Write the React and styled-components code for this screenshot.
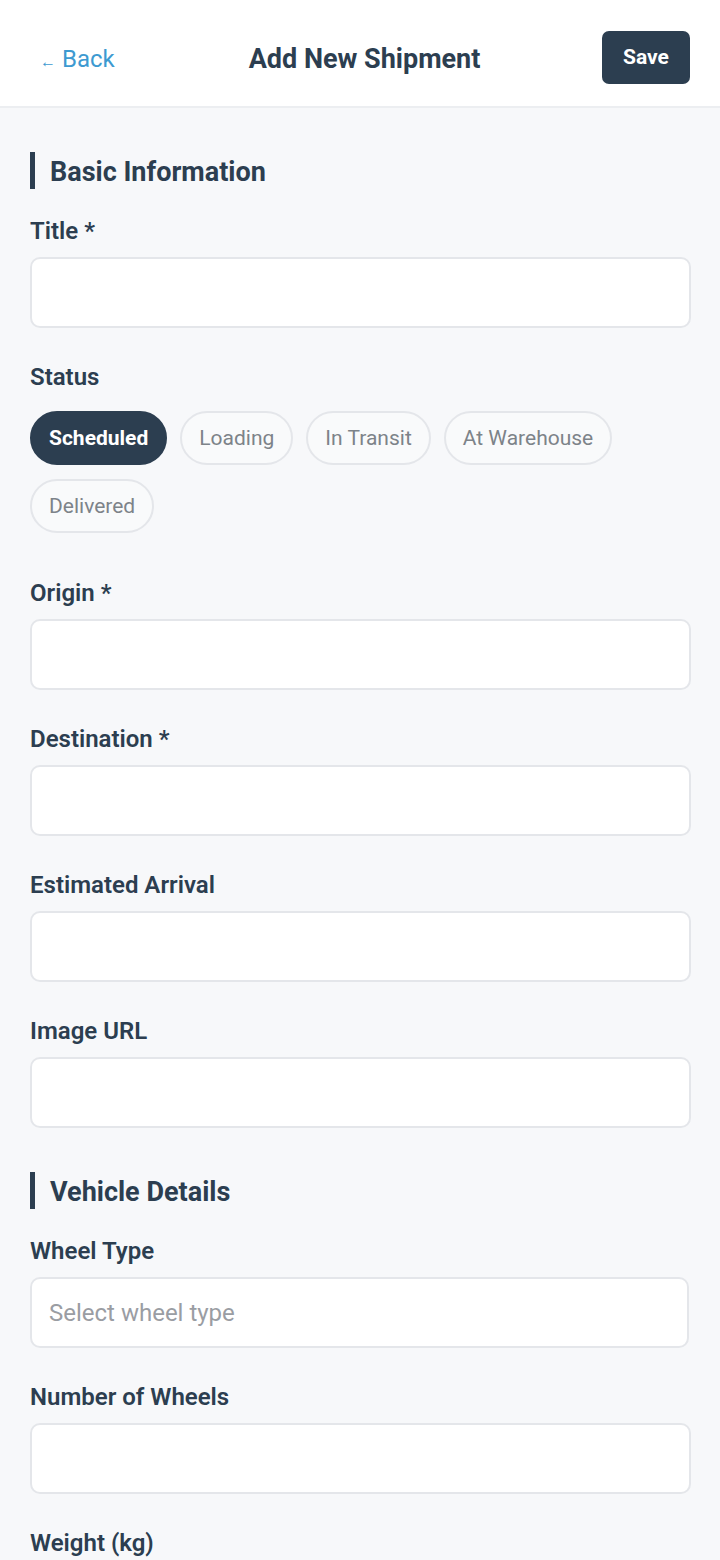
import React, { useState } from "react";
import styled, { createGlobalStyle } from "styled-components";

const GlobalStyle = createGlobalStyle`
  * { box-sizing: border-box; }
  body {
    margin: 0;
    background: #f7f8fa;
    font-family: Roboto, "Noto Sans", "Liberation Sans", sans-serif;
    color: #2c3e50;
  }
`;

const statuses = ["Scheduled", "Loading", "In Transit", "At Warehouse", "Delivered"];

const App = () => {
  const [status, setStatus] = useState("Scheduled");
  return (
    <Page>
      <GlobalStyle />
      <TopBar>
        <BackLink>
          <span>←</span> Back
        </BackLink>
        <PageTitle>Add New Shipment</PageTitle>
        <SaveButton>Save</SaveButton>
      </TopBar>
      <Form>
        <SectionTitle>Basic Information</SectionTitle>
        <Field>
          <Label>Title *</Label>
          <Input />
        </Field>
        <Field $wide>
          <Label>Status</Label>
          <Chips>
            {statuses.map((s) => (
              <Chip key={s} $active={s === status} onClick={() => setStatus(s)}>
                {s}
              </Chip>
            ))}
          </Chips>
        </Field>
        <Field>
          <Label>Origin *</Label>
          <Input />
        </Field>
        <Field>
          <Label>Destination *</Label>
          <Input />
        </Field>
        <Field>
          <Label>Estimated Arrival</Label>
          <Input />
        </Field>
        <Field>
          <Label>Image URL</Label>
          <Input />
        </Field>
        <SectionTitle $second>Vehicle Details</SectionTitle>
        <Field>
          <Label>Wheel Type</Label>
          <Input $select placeholder="Select wheel type" />
        </Field>
        <Field>
          <Label>Number of Wheels</Label>
          <Input />
        </Field>
        <Field>
          <Label>Weight (kg)</Label>
          <Input />
        </Field>
      </Form>
    </Page>
  );
};

const Page = styled.div`
  height: 1560px;
  overflow: hidden;
  background: #f7f8fa;
`;

const TopBar = styled.div`
  height: 108px;
  background: #fff;
  border-bottom: 2px solid #eceef1;
  display: flex;
  align-items: center;
  justify-content: space-between;
  padding: 8px 30px 0 40px;
`;

const BackLink = styled.div`
  font-size: 24px;
  color: #3d9ad1;
  width: 87px;
  padding-top: 3px;
  span {
    font-size: 16px;
  }
`;

const PageTitle = styled.h1`
  margin: 0;
  padding-top: 3px;
  font-size: 27px;
  font-weight: 700;
  color: #2c3e50;
`;

const SaveButton = styled.button`
  width: 88px;
  height: 53px;
  border: none;
  border-radius: 7px;
  background: #2c3e50;
  color: #fff;
  font-family: inherit;
  font-size: 21px;
  font-weight: 700;
`;

const Form = styled.div`
  padding: 44px 30px 0 30px;
  display: flex;
  flex-direction: column;
`;

const SectionTitle = styled.h2`
  margin: 0 0 28px 0;
  margin-top: ${(p) => (p.$second ? "9px" : "0")};
  height: 37px;
  border-left: 5px solid #2c3e50;
  padding: 3px 0 0 15px;
  display: flex;
  align-items: center;
  font-size: 27px;
  font-weight: 700;
  color: #2c3e50;
`;

const Field = styled.div`
  display: flex;
  flex-direction: column;
  margin-bottom: ${(p) => (p.$wide ? "46px" : "35px")};
`;

const Label = styled.label`
  font-size: 24px;
  font-weight: 600;
  line-height: 28px;
  color: #2c3e50;
  margin-bottom: 12px;
`;

const Input = styled.input`
  height: 71px;
  width: ${(p) => (p.$select ? "659px" : "661px")};
  background: #fff;
  border: 2px solid #e4e6ea;
  border-radius: 10px;
  padding: 0 17px;
  font-family: inherit;
  font-size: 24px;
  color: #2c3e50;
  outline: none;
  &::placeholder {
    color: #9a9da3;
  }
`;

const Chips = styled.div`
  display: flex;
  flex-wrap: wrap;
  gap: 14px 13px;
  margin-top: 8px;
`;

const Chip = styled.button`
  height: 54px;
  padding: 0 17px;
  border-radius: 27px;
  border: 2px solid ${(p) => (p.$active ? "#2c3e50" : "#e4e6ea")};
  background: ${(p) => (p.$active ? "#2c3e50" : "#f9fafb")};
  color: ${(p) => (p.$active ? "#fff" : "#7d8389")};
  font-family: inherit;
  font-size: 21px;
  font-weight: ${(p) => (p.$active ? 700 : 400)};
  cursor: pointer;
`;

export default App;
